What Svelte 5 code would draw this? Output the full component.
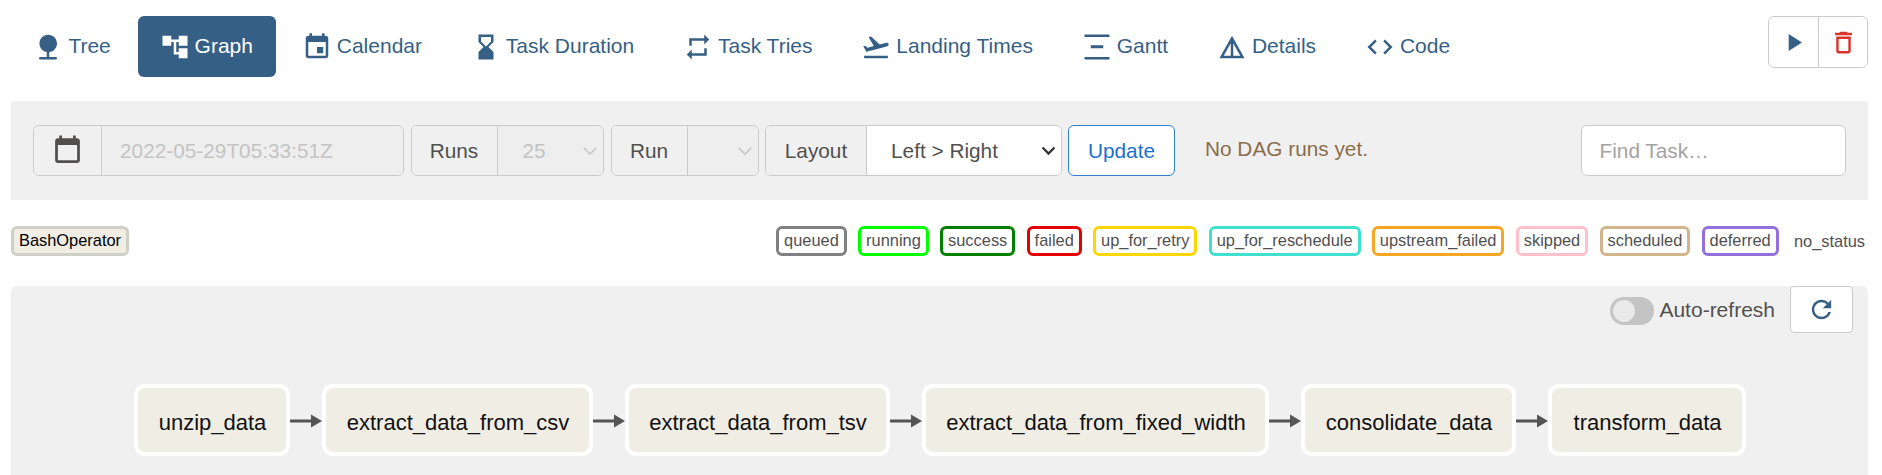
<script>
  const navIcons = {
    tree: 'M13 16.12c3.47-.41 6.17-3.36 6.17-6.95 0-3.87-3.13-7-7-7s-7 3.13-7 7c0 3.47 2.52 6.34 5.83 6.89V20H5v2h14v-2h-6v-3.88z',
    graph: 'M22 11V3h-7v3H9V3H2v8h7V8h2v10h4v3h7v-8h-7v3h-2V8h2v3z',
    calendar: 'M17 12h-5v5h5v-5zM16 1v2H8V1H6v2H5c-1.11 0-1.99.9-1.99 2L3 19c0 1.1.89 2 2 2h14c1.1 0 2-.9 2-2V5c0-1.1-.9-2-2-2h-1V1h-2zm3 18H5V8h14v11z',
    duration: 'M18 22l-.01-6L14 12l3.99-4.01L18 2H6v6l4 4-4 3.99V22h12zM8 7.5V4h8v3.5l-4 4-4-4z',
    tries: 'M7 7h10v3l4-4-4-4v3H5v6h2V7zm10 10H7v-3l-4 4 4 4v-3h12v-6h-2v4z',
    landing: 'M2.5 19h19v2h-19v-2zm19.57-9.36c-.21-.8-1.04-1.28-1.84-1.06L14.92 10l-6.9-6.43-1.93.51 4.14 7.17-4.97 1.33-1.97-1.54-1.45.39 2.59 4.49s7.12-1.9 16.57-4.43c.81-.23 1.28-1.05 1.07-1.85z',
    gantt: 'M2 2h20v2H2zM2 20h20v2H2zM7 10.5h10v2.5H7z',
    details: 'M12 3L2 21h20L12 3zm1 5.92L18.6 19H13V8.92zm-2 0V19H5.4L11 8.92z',
    code: 'M9.4 16.6L4.8 12l4.6-4.6L8 6l-6 6 6 6 1.4-1.4zm5.2 0l4.6-4.6-4.6-4.6L16 6l6 6-6 6-1.4-1.4z'
  };
  const tabs = [
    ['tree', 'Tree'], ['graph', 'Graph'], ['calendar', 'Calendar'], ['duration', 'Task Duration'],
    ['tries', 'Task Tries'], ['landing', 'Landing Times'], ['gantt', 'Gantt'], ['details', 'Details'], ['code', 'Code']
  ];
  const states = [
    ['queued', '#808080'], ['running', '#00ff00'], ['success', '#008000'], ['failed', '#e60000'],
    ['up_for_retry', '#ffd700'], ['up_for_reschedule', '#40e0d0'], ['upstream_failed', '#f5a623'],
    ['skipped', '#ffc0cb'], ['scheduled', '#d2b48c'], ['deferred', '#9370db']
  ];
  const tasks = [
    ['unzip_data', 156], ['extract_data_from_csv', 271], ['extract_data_from_tsv', 265],
    ['extract_data_from_fixed_width', 347], ['consolidate_data', 215], ['transform_data', 198]
  ];
</script>

<div class="page">
  <header class="topbar">
    <nav class="tabs">
      {#each tabs as [id, label]}
        <a class="tab" class:active={id === 'graph'} href="#{id}">
          <svg class="icon" viewBox="0 0 24 24"><path d={navIcons[id]} /></svg>
          <span>{label}</span>
        </a>
      {/each}
    </nav>
    <div class="actions">
      <button class="act" aria-label="Trigger">
        <svg class="act-icon play" viewBox="0 0 24 24"><path d="M8 5v14l11-7z" /></svg>
      </button>
      <button class="act" aria-label="Delete">
        <svg class="act-icon trash" viewBox="0 0 24 24"><path d="M6 19c0 1.1.9 2 2 2h8c1.1 0 2-.9 2-2V7H6v12zM8 9h8v10H8V9zm7.5-5l-1-1h-5l-1 1H5v2h14V4z" /></svg>
      </button>
    </div>
  </header>

  <form class="filters" onsubmit={(e) => e.preventDefault()}>
    <div class="group g-date">
      <span class="addon cal">
        <svg viewBox="0 0 24 24"><path d="M19 3h-1V1h-2v2H8V1H6v2H5c-1.11 0-1.99.9-1.99 2L3 19c0 1.1.89 2 2 2h14c1.1 0 2-.9 2-2V5c0-1.1-.9-2-2-2zm0 16H5V8h14v11z" /></svg>
      </span>
      <input class="field dim" disabled value="2022-05-29T05:33:51Z" />
    </div>
    <div class="group g-runs">
      <span class="addon a-runs">Runs</span>
      <div class="field dim fake">
        <span>25</span>
        <svg class="chev" viewBox="0 0 16 16"><path d="M3 5.5l5 5 5-5" /></svg>
      </div>
    </div>
    <div class="group g-run">
      <span class="addon a-run">Run</span>
      <div class="field dim fake">
        <span></span>
        <svg class="chev" viewBox="0 0 16 16"><path d="M3 5.5l5 5 5-5" /></svg>
      </div>
    </div>
    <div class="group g-layout">
      <span class="addon a-layout">Layout</span>
      <select class="field pick">
        <option>Left &gt; Right</option>
        <option>Top &gt; Bottom</option>
      </select>
      <svg class="pick-arrow" viewBox="0 0 16 16"><path d="M3 5.5l5 5 5-5" /></svg>
    </div>
    <button class="update" type="button">Update</button>
    <p class="notice">No DAG runs yet.</p>
    <input class="find" placeholder="Find Task…" />
  </form>

  <section class="legend">
    <span class="chip operator">BashOperator</span>
    <div class="status">
      {#each states as [name, color]}
        <span class="chip" style="border-color:{color}">{name}</span>
      {/each}
      <span class="plain">no_status</span>
    </div>
  </section>

  <section class="canvas">
    <div class="canvas-top">
      <span class="switch"><i></i></span>
      <span class="auto">Auto-refresh</span>
      <button class="refresh" aria-label="Refresh">
        <svg viewBox="0 0 24 24"><path d="M17.65 6.35C16.2 4.9 14.21 4 12 4c-4.42 0-7.99 3.58-7.99 8s3.57 8 7.99 8c3.73 0 6.84-2.55 7.73-6h-2.08c-.82 2.33-3.04 4-5.65 4-3.31 0-6-2.69-6-6s2.69-6 6-6c1.66 0 3.14.69 4.22 1.78L13 11h7V4l-2.35 2.35z" /></svg>
      </button>
    </div>
    <div class="dag">
      {#each tasks as [task, width], i}
        {#if i > 0}
          <svg class="edge" viewBox="0 0 32 14"><path class="shaft" d="M0 7h22" /><path class="head" d="M21 .5L32 7l-11 6.5z" /></svg>
        {/if}
        <div class="node" style="width:{width}px">{task}</div>
      {/each}
    </div>
  </section>
</div>

<style>
  :global(body) {
    margin: 0;
    background: #fff;
    font-family: "Liberation Sans", Arial, sans-serif;
  }
  .page {
    height: 475px;
    overflow: hidden;
    padding: 16px 14px 0 11px;
    box-sizing: border-box;
    font-size: 20.8px;
    color: #51504f;
  }
  .topbar {
    display: flex;
    justify-content: space-between;
    height: 61px;
  }
  .tabs {
    display: flex;
    gap: 3.8px;
    padding-left: 0.4px;
  }
  .tab {
    display: flex;
    align-items: center;
    gap: 6px;
    padding: 0 23px 0 22px;
    border-radius: 6px;
    color: #365f85;
    font-size: 21px;
    line-height: 22px;
    text-decoration: none;
  }
  .tab span { margin-top: -1px; }
  .tab.active {
    background: #365f85;
    color: #fff;
  }
  .icon {
    width: 30px;
    height: 30px;
    margin-right: -1px;
    fill: currentColor;
    flex: none;
  }
  .actions {
    display: flex;
    height: 52px;
    border: 1px solid #cbcbcb;
    border-radius: 6px;
    box-sizing: border-box;
  }
  .act {
    width: 49px;
    padding: 0;
    background: #fff;
    border: 0;
    border-radius: 6px;
    display: flex;
    align-items: center;
    justify-content: center;
  }
  .act + .act {
    border-left: 1px solid #cbcbcb;
    border-radius: 0 6px 6px 0;
  }
  .act-icon {
    width: 29px;
    height: 29px;
  }
  .play { fill: #365f85; }
  .trash { fill: #d9342b; }

  .filters {
    display: flex;
    align-items: center;
    height: 99px;
    margin-top: 24px;
    padding: 0 22.5px 0 22px;
    background: #f0f0f0;
    box-sizing: border-box;
  }
  .group {
    display: flex;
    height: 51px;
    margin-right: 6.5px;
    border: 1px solid #cbcbcb;
    border-radius: 6px;
    box-sizing: border-box;
    overflow: hidden;
  }
  .g-date { width: 371px; }
  .g-runs { width: 193.5px; }
  .g-run { width: 148px; }
  .g-layout { width: 297px; margin-right: 6px; background: #fff; position: relative; }
  .addon {
    display: flex;
    align-items: center;
    justify-content: center;
    flex: none;
    background: #f0f0f0;
    border-right: 1px solid #cbcbcb;
    box-sizing: border-box;
  }
  .cal { width: 68px; }
  .cal svg { width: 33px; height: 33px; fill: #51504f; }
  .a-runs { width: 86px; }
  .a-run { width: 76px; }
  .a-layout { width: 101px; }
  .field {
    flex: 1;
    min-width: 0;
    height: 100%;
    border: 0;
    padding: 0 18px;
    font: inherit;
    box-sizing: border-box;
  }
  .dim {
    background: #eeeeee;
    color: #c4c4c4;
  }
  input.dim {
    opacity: 1;
    -webkit-text-fill-color: #c4c4c4;
  }
  .fake {
    display: flex;
    align-items: center;
    justify-content: space-between;
    padding: 0 3px 0 25px;
  }
  .chev {
    width: 20px;
    height: 20px;
    fill: none;
    stroke: #c9c9c9;
    stroke-width: 1.2;
  }
  .pick {
    appearance: none;
    background: #fff;
    color: #51504f;
    padding: 0 6px 0 24px;
    outline: 0;
  }
  .pick-arrow {
    position: absolute;
    right: 3px;
    top: 15px;
    width: 19px;
    height: 19px;
    fill: none;
    stroke: #333;
    stroke-width: 2;
    pointer-events: none;
  }
  .update {
    width: 107px;
    height: 51px;
    background: #fff;
    border: 1px solid #2f7fd6;
    border-radius: 6px;
    color: #2070cf;
    font: inherit;
    padding: 0;
  }
  .notice {
    margin: -4px 0 0 30px;
    color: #8a6d4b;
  }
  .find {
    width: 265px;
    height: 51px;
    margin-left: auto;
    padding: 0 18px;
    background: #fff;
    border: 1px solid #cbcbcb;
    border-radius: 6px;
    box-sizing: border-box;
    font: inherit;
    color: #51504f;
  }
  .find::placeholder { color: #a3a3a3; opacity: 1; }

  .legend {
    display: flex;
    justify-content: space-between;
    align-items: center;
    height: 30px;
    margin-top: 26px;
    font-size: 16.4px;
  }
  .status {
    display: flex;
    align-items: center;
    gap: 11.3px;
  }
  .chip {
    display: flex;
    align-items: center;
    height: 30px;
    padding: 0 5px 1px;
    border: 3px solid #ccc;
    border-radius: 6px;
    box-sizing: border-box;
    background: #fff;
  }
  .operator {
    background: #f0ede4;
    border-color: #cfcfc8;
    color: #000;
  }
  .plain {
    margin-left: 4px;
    margin-right: 3px;
  }

  .canvas {
    height: 189px;
    margin-top: 30px;
    background: #f0f0f0;
    border-radius: 6px 6px 0 0;
  }
  .canvas-top {
    display: flex;
    justify-content: flex-end;
    padding-right: 15px;
  }
  .switch {
    width: 44px;
    height: 28px;
    margin-top: 11px;
    background: #c4c4c4;
    border-radius: 14px;
    position: relative;
  }
  .switch i {
    position: absolute;
    left: 3px;
    top: 3px;
    width: 22px;
    height: 22px;
    background: #e9e9e9;
    border-radius: 50%;
  }
  .auto {
    margin: 10px 15px 0 5px;
    line-height: 27px;
    font-size: 21px;
  }
  .refresh {
    width: 63px;
    height: 47px;
    padding: 0;
    background: #fff;
    border: 1px solid #cbcbcb;
    border-radius: 4px;
    display: flex;
    align-items: center;
    justify-content: center;
  }
  .refresh svg {
    width: 29px;
    height: 29px;
    fill: #365f85;
  }
  .dag {
    display: flex;
    align-items: center;
    padding: 51px 0 0 122.5px;
  }
  .node {
    height: 72px;
    padding: 6px 0 0 2px;
    display: flex;
    align-items: center;
    justify-content: center;
    flex: none;
    background: #f0ede4;
    border: 4px solid #fff;
    border-radius: 11px;
    box-sizing: border-box;
    color: #111;
    font-size: 22px;
    white-space: nowrap;
  }
  .edge {
    width: 32px;
    height: 14px;
    flex: none;
    margin-top: 1px;
  }
  .shaft { stroke: #555; stroke-width: 3; fill: none; }
  .head { fill: #555; }
</style>
